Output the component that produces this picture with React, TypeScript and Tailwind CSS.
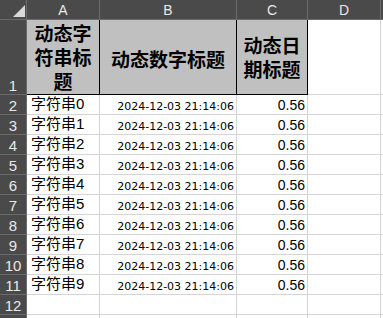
import React from "react";

const HDR = "bg-[#4a4a4a] text-[#e8e8e8]";
const rows = Array.from({ length: 10 }, (_, i) => i);

export default function App() {
  const cjkBold = { fontFamily: '"Noto Sans CJK SC", sans-serif' };
  return (
    <div className="w-[383px] h-[318px] overflow-hidden bg-white" style={{ fontFamily: '"Liberation Sans", Arial, sans-serif' }}>
      <div className="grid grid-cols-[27px_73px_137px_71px_73px_1fr] grid-rows-[20px_75px_repeat(12,20px)]">
        {/* header row */}
        <div className={`${HDR} border-r border-b border-[#6b6b6b] relative`}>
          <svg className="absolute left-[13px] top-[5px]" width="12" height="12" viewBox="0 0 12 12">
            <polygon points="12,0 12,12 0,12" fill="#d9d9d9" />
          </svg>
        </div>
        {["A", "B", "C", "D"].map((c) => (
          <div key={c} className={`${HDR} border-r border-b border-[#6b6b6b] flex items-center justify-center text-[14px] leading-none`}>
            {c}
          </div>
        ))}
        <div className={`${HDR} border-b border-[#6b6b6b]`} />

        {/* row 1 */}
        <div className={`${HDR} border-r border-b border-[#6b6b6b] flex items-end justify-center pb-[1px] text-[15px] leading-none`}>1</div>
        <div className="bg-[#c0c0c0] border-r border-b border-black flex items-center justify-center text-center text-[19px] leading-[24px] font-bold text-black px-[5px]" style={cjkBold}>
          动态字符串标题
        </div>
        <div className="bg-[#c0c0c0] border-r border-b border-black flex items-center justify-center text-center text-[19px] leading-[24px] font-bold text-black pt-[4px]" style={cjkBold}>
          动态数字标题
        </div>
        <div className="bg-[#c0c0c0] border-r border-b border-black flex items-center justify-center text-center text-[19px] leading-[24px] font-bold text-black px-[5px]" style={cjkBold}>
          动态日期标题
        </div>
        <div className="border-r border-b border-[#d4d4d4]" />
        <div className="border-b border-[#d4d4d4]" />

        {rows.map((i) => (
          <React.Fragment key={i}>
            <div className={`${HDR} border-r border-b border-[#6b6b6b] flex items-end justify-center pb-[1px] text-[15px] leading-none`}>{i + 2}</div>
            <div className="border-r border-b border-[#d4d4d4] flex items-end pl-[4px] pb-[1px] text-[15px] leading-[18px] text-black" style={{ fontFamily: '"Liberation Sans", "Noto Sans CJK SC", sans-serif' }}>
              字符串{i}
            </div>
            <div className="border-r border-b border-[#d4d4d4] flex items-end justify-end pr-[2px] pb-[2px] text-[11px] leading-none text-black" style={{ fontFamily: '"DejaVu Sans", sans-serif' }}>
              2024-12-03 21:14:06
            </div>
            <div className="border-r border-b border-[#d4d4d4] flex items-end justify-end pr-[2px] pb-[2px] text-[14px] leading-none text-black">0.56</div>
            <div className="border-r border-b border-[#d4d4d4]" />
            <div className="border-b border-[#d4d4d4]" />
          </React.Fragment>
        ))}

        <div className={`${HDR} border-r border-b border-[#6b6b6b] flex items-end justify-center pb-[1px] text-[15px] leading-none`}>12</div>
        <div className="border-r border-b border-[#d4d4d4]" />
        <div className="border-r border-b border-[#d4d4d4]" />
        <div className="border-r border-b border-[#d4d4d4]" />
        <div className="border-r border-b border-[#d4d4d4]" />
        <div className="border-b border-[#d4d4d4]" />

        <div className={`${HDR} border-r border-b border-[#6b6b6b]`} />
        <div className="border-r border-b border-[#d4d4d4]" />
        <div className="border-r border-b border-[#d4d4d4]" />
        <div className="border-r border-b border-[#d4d4d4]" />
        <div className="border-r border-b border-[#d4d4d4]" />
        <div className="border-b border-[#d4d4d4]" />
      </div>
    </div>
  );
}
